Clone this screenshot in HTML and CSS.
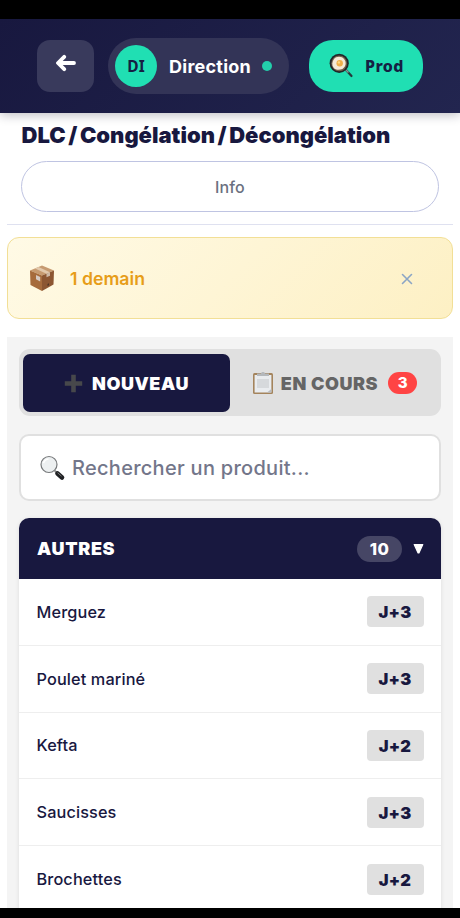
FILE: index.html
```html
<!DOCTYPE html>
<html lang="fr">
<head>
<meta charset="utf-8">
<title>DLC / Congélation / Décongélation</title>
<link rel="stylesheet" href="styles.css">
</head>
<body>
<header class="topbar">
  <button class="back" aria-label="Retour">
    <svg width="20" height="18" viewBox="0 0 20 18"><path d="M18 9H3M8.2 2.800 2 9l6.200 6.200" fill="none" stroke="#fff" stroke-width="3.800" stroke-linecap="round" stroke-linejoin="round"/></svg>
  </button>
  <div class="user">
    <span class="avatar">DI</span>
    <span class="user-name">Direction</span>
    <span class="status"></span>
  </div>
  <button class="prod">
    <svg class="pan" width="26" height="26" viewBox="0 0 26 26">
      <path d="m17 17 5.500 6" stroke="#26383b" stroke-width="2.200" stroke-linecap="round"/>
      <path d="m16.500 16.500 3 3" stroke="#789c96" stroke-width="1.500"/>
      <circle cx="10.200" cy="10.300" r="9.600" fill="#20272a"/>
      <circle cx="10.200" cy="10.300" r="7.900" fill="#75604a"/>
      <path d="M5 6c2-3 8-3 10 0 3 3 1.800 8-1.600 10-3 1.300-7 1.200-8.800-1.200C2.600 12.200 3 8.700 5 6z" fill="#f5ead7"/>
      <circle cx="10.700" cy="10.300" r="3.200" fill="#efb04a"/>
      <circle cx="9.900" cy="9.400" r="1.200" fill="#ffd980"/>
    </svg>
    <span class="prod-text">Prod</span>
  </button>
</header>
<main>
  <section class="heading">
    <h1>DLC / Congélation / Décongélation</h1>
    <button class="info">Info</button>
  </section>
  <section class="alert">
    <svg width="26" height="28" viewBox="0 0 26 28">
      <path d="M1 6.500 13 1.500l12 5-12 5z" fill="#c69a70"/>
      <path d="M1 6.500 13 11.500V27L1.500 21z" fill="#a66b3c"/>
      <path d="m25 6.500-12 5V27l11.500-6.500z" fill="#8c5632"/>
      <path d="m6 4.400 3.500-1.500L21 8.200l-3.500 1.600z" fill="#e2c8ab"/>
      <path d="M17.500 9.800 21 8.200v3.500l-3.500 1.600z" fill="#cdb8a5"/>
      <path d="m7 11 4.200 1.900v4.600L7 15.300z" fill="#d6cac2"/>
      <path d="m18.500 20 1.500-.7v2l-1.500.8z" fill="#4e3425"/>
    </svg>
    <span class="alert-text">1 demain</span>
    <button class="close" aria-label="Fermer"><svg width="12" height="12" viewBox="0 0 12 12"><path d="m1.500 1.500 9 9m0-9-9 9" stroke="#8ba5c5" stroke-width="1.600" stroke-linecap="round"/></svg></button>
  </section>
  <section class="panel">
    <nav class="tabs">
      <button class="tab active">
        <svg width="19" height="19" viewBox="0 0 19 19"><path d="M7.200 .8h4.600v6.400h6.400v4.600h-6.400v6.400H7.200v-6.400H.8V7.200h6.400z" fill="#47484b"/></svg>
        <span class="tab-new">NOUVEAU</span>
      </button>
      <button class="tab">
        <svg width="22" height="24" viewBox="0 0 22 24">
          <rect x="1" y="2" width="20" height="21" rx="1.500" fill="#a4845c"/>
          <rect x="2.600" y="4" width="16.800" height="17.500" fill="#e9ecef"/>
          <path d="M5 8h12v9H5z" fill="#d6d9dc"/>
          <path d="M5 5V2.500h4C9 .5 13 .5 13 2.500h4V5z" fill="#b4b8bc"/>
          <path d="M15 21.500h4.400V18z" fill="#b9bdc3"/>
        </svg>
        <span class="tab-current">EN COURS</span>
        <span class="badge">3</span>
      </button>
    </nav>
    <label class="search">
      <svg width="26" height="26" viewBox="0 0 26 26">
        <path d="m14.800 15.800 3 3" stroke="#888" stroke-width="2"/>
        <path d="m17.500 18.500 4.500 4" stroke="#202124" stroke-width="4.600" stroke-linecap="round"/>
        <path d="m17.500 17.700 4 3.500" stroke="#777" stroke-width="1"/>
        <circle cx="9" cy="9.500" r="8" fill="#edf0f1" stroke="#77797b" stroke-width="1.200"/>
        <path d="M3.500 8c.8-2.400 2.500-3.700 5-4" fill="none" stroke="#fff" stroke-width="1.600"/>
      </svg>
      <span class="search-text">Rechercher un produit...</span>
    </label>
    <div class="card">
      <div class="card-head">
        <span class="card-title">AUTRES</span>
        <span class="count">10</span>
        <svg class="caret" width="11" height="12" viewBox="0 0 11 12"><path d="M1.200 1.500h8.600L5.900 10h-.8z" fill="#fff" stroke="#fff" stroke-width="1.200" stroke-linejoin="round"/></svg>
      </div>
      <div class="row"><span>Merguez</span><b>J+3</b></div>
      <div class="row"><span>Poulet mariné</span><b>J+3</b></div>
      <div class="row"><span>Kefta</span><b>J+2</b></div>
      <div class="row"><span>Saucisses</span><b>J+3</b></div>
      <div class="row"><span>Brochettes</span><b>J+2</b></div>
    </div>
  </section>
</main>
</body>
</html>
```
FILE: styles.css
```css
* { box-sizing: border-box; }
html { background: #fff; }
body {
  margin: 0;
  width: 460px;
  height: 918px;
  overflow: hidden;
  border-top: 19px solid #000;
  border-bottom: 10px solid #000;
  display: flex;
  flex-direction: column;
  background: #fff;
  color: #18183f;
  font-family: Inter, sans-serif;
}
button { border: 0; padding: 0; margin: 0; background: none; color: inherit; font: inherit; }
svg { display: block; flex: none; }
span { white-space: nowrap; }
.topbar {
  height: 94px;
  flex: none;
  display: flex;
  align-items: center;
  padding: 0 37px;
  background: linear-gradient(135deg, #18183f, #22254f);
  box-shadow: 0 2px 10px rgba(20, 20, 40, .28);
}
.back {
  width: 57px;
  height: 52px;
  border-radius: 13px;
  background: #393a5c;
  display: flex;
  align-items: center;
  justify-content: center;
  padding-bottom: 6px;
}
.user {
  width: 181px;
  height: 56px;
  margin-left: 14px;
  padding-left: 7px;
  border-radius: 28px;
  background: #333457;
  display: flex;
  align-items: center;
}
.avatar {
  width: 42px;
  height: 42px;
  border-radius: 50%;
  background: #20dfb3;
  color: #152043;
  display: flex;
  align-items: center;
  justify-content: center;
  font: 700 15.5px "Noto Sans", sans-serif;
}
.user-name { width: 84px; margin-left: 12px; color: #fff; font-size: 18px; font-weight: 700; letter-spacing: .25px; }
.status { width: 10px; height: 10px; margin-left: 9px; border-radius: 50%; background: #23cfab; }
.prod {
  width: 114px;
  height: 52px;
  margin-left: 20px;
  padding-left: 20px;
  border-radius: 24px;
  background: #20dfb3;
  display: flex;
  align-items: center;
}
.prod-text { margin-left: 10px; color: #152043; font: 800 16px "Noto Sans", sans-serif; letter-spacing: .4px; }
main { flex: 1; min-height: 0; padding: 0 7px; }
.heading { height: 112px; padding: 8px 14px 0; border-bottom: 1px solid #dfe1f0; }
h1 {
  margin: 0;
  height: 40px;
  padding-left: .5px;
  line-height: 29px;
  font-size: 22px;
  font-weight: 900;
  word-spacing: -1.800px;
  white-space: nowrap;
}
.info {
  width: 418px;
  height: 51px;
  display: block;
  border: 1px solid #bfc4e2;
  border-radius: 26px;
  color: #6b7080;
  font-size: 16px;
  font-weight: 500;
  letter-spacing: .15px;
}
.alert {
  height: 82px;
  margin-top: 12px;
  padding: 0 39px 0 21px;
  border: 1px solid #f2df96;
  border-radius: 12px;
  background: linear-gradient(135deg, #fffae6, #fdf0c4);
  display: flex;
  align-items: center;
}
.alert-text { margin-left: 15px; color: #e79d18; font-size: 17.700px; font-weight: 600; }
.close { margin-left: auto; padding-top: 2px; }
.panel { height: 600px; margin-top: 18px; padding: 12px 12px 0; background: #f4f4f4; }
.tabs { display: flex; height: 67px; padding: 5px 4px 4px; border-radius: 11px; background: #e0e0e0; }
.tab { width: 207px; display: flex; align-items: center; justify-content: center; color: #656565; font-size: 18px; font-weight: 900; letter-spacing: .55px; }
.tab.active { background: #18183f; color: #fff; border-radius: 7px; }
.tab-new { margin-left: 9px; }
.tab-current { margin-left: 7px; }
.badge {
  width: 29px;
  height: 22px;
  margin-left: 10px;
  margin-right: -2px;
  border-radius: 11px;
  background: #ff4444;
  color: #fff;
  font-size: 15px;
  font-weight: 800;
  letter-spacing: 0;
  line-height: 22px;
  text-align: center;
}
.search {
  height: 67px;
  margin-top: 18px;
  padding-left: 19px;
  border: 2px solid #e0e0e0;
  border-radius: 10px;
  background: #fff;
  display: flex;
  align-items: center;
}
.search-text { margin-left: 6px; color: #73768a; font-size: 20px; font-weight: 500; letter-spacing: .28px; }
.card { margin-top: 17px; border-radius: 10px 10px 0 0; background: #fff; box-shadow: 0 1px 4px rgba(0, 0, 0, .1); }
.card-head {
  height: 61px;
  padding: 0 17px 0 18px;
  border-radius: 10px 10px 0 0;
  background: #18183f;
  color: #fff;
  display: flex;
  align-items: center;
}
.card-title { font-size: 18px; font-weight: 900; letter-spacing: .65px; }
.count {
  width: 45px;
  height: 26px;
  margin-left: auto;
  border-radius: 13px;
  background: #464665;
  font-size: 16.500px;
  font-weight: 800;
  line-height: 26px;
  text-align: center;
  letter-spacing: .4px;
}
.caret { margin-left: 11px; }
.row {
  height: 66.8px;
  padding: 0 17.5px;
  border-bottom: 1px solid #eee;
  display: flex;
  align-items: center;
  justify-content: space-between;
  font-size: 16.300px;
  font-weight: 500;
  letter-spacing: .12px;
}
.row b {
  width: 57px;
  height: 31px;
  border-radius: 4px;
  background: #e0e0e0;
  font-size: 16.500px;
  font-weight: 900;
  line-height: 32px;
  text-align: center;
  letter-spacing: .3px;
}
```
